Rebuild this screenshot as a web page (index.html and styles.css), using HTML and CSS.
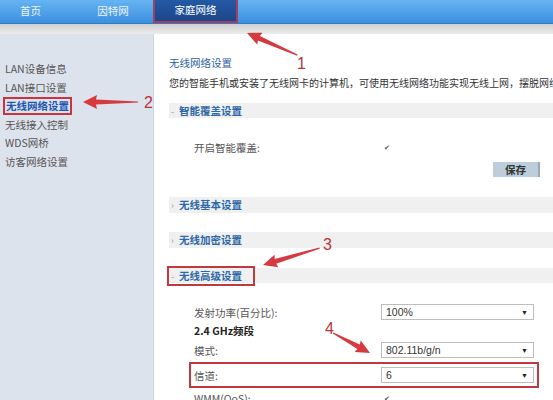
FILE: index.html
```html
<!DOCTYPE html>
<html lang="zh-CN">
<head>
    <meta charset="UTF-8">
    <meta name="viewport" content="width=device-width, initial-scale=1.0">
    <title>家庭网络 - 无线网络设置</title>
    <link rel="stylesheet" href="styles.css">
</head>
<body>
    <!-- Barra superior -->
    <div class="topnav">
        <a class="nav-item nav-home">首页</a>
        <a class="nav-item nav-wan">因特网</a>
        <a class="nav-item nav-active">家庭网络</a>
    </div>
    <div class="subbar"></div>

    <div class="layout">
        <ul class="sidebar">
            <li>LAN设备信息</li>
            <li>LAN接口设置</li>
            <li><span class="side-active">无线网络设置</span></li>
            <li>无线接入控制</li>
            <li>WDS网桥</li>
            <li>访客网络设置</li>
        </ul>

        <div class="main">
            <div class="page-title">无线网络设置</div>
            <div class="page-desc">您的智能手机或安装了无线网卡的计算机，可使用无线网络功能实现无线上网，摆脱网线的束缚。</div>

            <div class="section-bar bar-first"><span class="marker">-</span>智能覆盖设置</div>
            <div class="form-row row-smart">
                <span class="label">开启智能覆盖:</span>
                <span class="check">✔</span>
            </div>
            <div class="btn-line">
                <button class="save-btn">保存</button>
            </div>

            <div class="section-bar bar-basic"><span class="marker">›</span>无线基本设置</div>
            <div class="section-bar bar-secure"><span class="marker">›</span>无线加密设置</div>
            <div class="section-bar bar-adv"><span class="marked"><span class="marker">-</span>无线高级设置</span></div>

            <div class="form-row row-power">
                <span class="label">发射功率(百分比):</span>
                <div class="select"><span>100%</span><span class="caret">▼</span></div>
            </div>
            <div class="band-title">2.4 GHz频段</div>
            <div class="form-row row-mode">
                <span class="label">模式:</span>
                <div class="select"><span>802.11b/g/n</span><span class="caret">▼</span></div>
            </div>
            <div class="form-row row-channel">
                <span class="label">信道:</span>
                <div class="select"><span>6</span><span class="caret">▼</span></div>
            </div>
            <div class="form-row row-wmm">
                <span class="label">WMM(QoS):</span>
                <span class="check">✔</span>
            </div>
        </div>
    </div>

    <!-- Flechas de anotación -->
    <svg class="annotations" width="553" height="400" viewBox="0 0 553 400">
        <g fill="#d63a3f">
            <polygon transform="translate(247,33) rotate(203.7)" points="-55,-0.6 -13,-2.5 -14,-6.5 0,0 -14,6.5 -13,2.5 -55,0.6"/>
            <polygon transform="translate(83,102) rotate(180)" points="-55,-0.6 -13,-2.5 -14,-7 0,0 -14,7 -13,2.5 -55,0.6"/>
            <polygon transform="translate(263,265) rotate(163.4)" points="-59,-0.6 -13,-2.5 -14,-6.5 0,0 -14,6.5 -13,2.5 -59,0.6"/>
            <polygon transform="translate(370,353) rotate(28.4)" points="-42,-0.6 -13,-2.5 -14,-6.5 0,0 -14,6.5 -13,2.5 -42,0.6"/>
        </g>
        <g class="num">
            <text x="297" y="69">1</text>
            <text x="144" y="108">2</text>
            <text x="323" y="250">3</text>
            <text x="325" y="334">4</text>
        </g>
    </svg>
</body>
</html>
```

FILE: styles.css
```css
/* Estilos generales */
body {
    margin: 0;
    width: 553px;
    height: 400px;
    overflow: hidden;
    position: relative;
    font-family: "Noto Sans CJK SC", "Noto Sans", sans-serif;
    font-size: 10.5px;
    color: #444;
    background: #ffffff;
}

/* Barra superior */
.topnav {
    height: 24px;
    display: flex;
    align-items: stretch;
    background: linear-gradient(to bottom, #66b4f2, #3d8fdf);
    border-bottom: 1px solid #2f7bc8;
    box-sizing: border-box;
}

.nav-item {
    display: flex;
    align-items: center;
    justify-content: center;
    color: #eef5ff;
    line-height: 1;
}

.nav-home {
    margin-left: 20px;
    width: 21px;
}

.nav-wan {
    margin-left: 56px;
    width: 32px;
}

.nav-active {
    margin-left: 24px;
    width: 85px;
    box-sizing: border-box;
    background: linear-gradient(to bottom, #2459a6, #1c4689);
    border: 2px solid #a83c5c;
    border-top: none;
    color: #ffffff;
}

.subbar {
    height: 10px;
    background: linear-gradient(to bottom, #cfcfcf, #ececec);
}

.layout {
    display: flex;
    height: 366px;
}

/* Menú lateral */
.sidebar {
    list-style: none;
    margin: 0;
    padding: 26px 0 0 0;
    width: 154px;
    box-sizing: border-box;
    background: #dde3ed;
    border-right: 1px solid #cdd4df;
}

.sidebar li {
    height: 18.6px;
    line-height: 18.6px;
    padding-left: 5px;
    color: #555;
    white-space: nowrap;
}

.side-active {
    display: inline-block;
    line-height: 14px;
    margin-left: -2px;
    padding: 0 1px;
    border: 2px solid #c8353f;
    color: #1f57b0;
    font-weight: bold;
}

/* Contenido principal */
.main {
    flex: 1;
    padding: 22px 0 0 15px;
    overflow: hidden;
}

.page-title {
    line-height: 14px;
    color: #2f5f9f;
}

.page-desc {
    margin-top: 6px;
    line-height: 14px;
    font-size: 10px;
    color: #333;
    white-space: nowrap;
}

.section-bar {
    height: 16px;
    line-height: 16px;
    background: #f0f0f0;
    color: #2d69a8;
    font-weight: bold;
    white-space: nowrap;
}

.marker {
    display: inline-block;
    width: 8px;
    padding-left: 2px;
    color: #999;
    font-weight: normal;
    font-size: 9px;
}

.bar-first {
    margin-top: 13px;
    height: 15px;
    line-height: 15px;
}

.bar-basic {
    margin-top: 20px;
}

.bar-secure {
    margin-top: 19px;
}

.bar-adv {
    margin-top: 20px;
    height: 15px;
    line-height: 15px;
}

.marked {
    display: inline-block;
    width: 84px;
    outline: 2px solid #c0393f;
    outline-offset: 0;
}

/* Filas del formulario */
.form-row {
    display: flex;
    align-items: center;
    padding-left: 25px;
    height: 16px;
}

.label {
    width: 187px;
    flex: none;
    color: #555;
}

.check {
    font-size: 7px;
    color: #555;
    padding-left: 3px;
}

.row-smart {
    margin-top: 22px;
    height: 14px;
}

.btn-line {
    display: flex;
    justify-content: flex-end;
    padding-right: 13px;
    margin-top: 8px;
}

.save-btn {
    width: 47px;
    height: 15px;
    padding: 0;
    border: none;
    border-right: 2px solid #9aa8b4;
    background: #bccddb;
    font-family: inherit;
    font-size: 10.5px;
    font-weight: bold;
    color: #333;
    line-height: 15px;
}

.select {
    width: 153px;
    height: 16px;
    box-sizing: border-box;
    border: 1px solid #bdbdbd;
    background: #fff;
    display: flex;
    align-items: center;
    justify-content: space-between;
    padding: 0 5px 0 4px;
    color: #333;
    font-family: "Liberation Sans", Arial, sans-serif;
    font-size: 10.5px;
}

.caret {
    font-size: 7px;
    color: #222;
}

.row-power {
    margin-top: 21px;
}

.band-title {
    margin-top: 4px;
    padding-left: 25px;
    line-height: 14px;
    font-weight: bold;
    color: #222;
}

.row-mode {
    margin-top: 4px;
}

.row-channel {
    margin: 4px 0 0 20px;
    width: 350px;
    height: 26px;
    box-sizing: border-box;
    padding-left: 3px;
    border: 2px solid #c0393f;
}

.row-channel .label {
    width: 187px;
}

.row-wmm {
    margin-top: 3px;
    height: 14px;
}

/* Anotaciones */
.annotations {
    position: absolute;
    top: 0;
    left: 0;
    pointer-events: none;
}

.num text {
    font-family: "Liberation Sans", Arial, sans-serif;
    font-size: 16px;
    fill: #b8333a;
}
```
